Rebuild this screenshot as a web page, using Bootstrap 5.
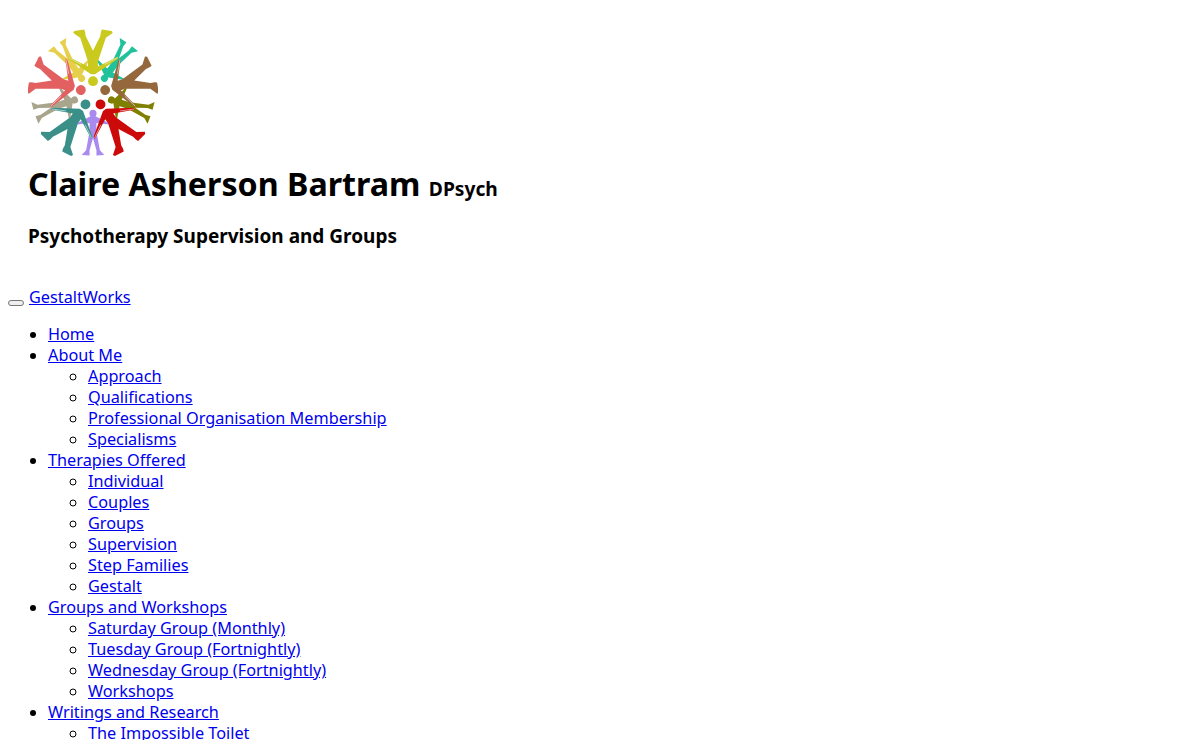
<!DOCTYPE html>
<html lang="en">
  <head>
    <meta charset="UTF-8" />
    <meta name="viewport" content="width=device-width, initial-scale=1.0" />
    <title>Claire Asherson Bartram</title>
    <link href="https://cdn.jsdelivr.net/npm/bootstrap@5.3.0/dist/css/bootstrap.min.css" rel="stylesheet" />
    <style>
      body {
        margin: 8px;
        font-family: "Noto Sans", sans-serif;
        font-size: 16.25px;
        line-height: 21px;
        color: #000;
        background: #fff;
      }
      a { color: #0000ee; }
      .site-head { padding: 20px 0 0 20px; }
      .site-logo { display: block; width: 130px; height: 132px; }
      .site-name { font-size: 32.2px; font-weight: 700; line-height: 45px; margin: 1px 0 0; color: #000; }
      .site-name small { font-size: 19.2px; font-weight: 700; }
      .site-tag { font-size: 19px; font-weight: 700; line-height: 27px; margin: 12px 0 0; }
      .nav-line { margin-top: 37px; height: 21px; }
      .bare-toggle {
        width: 16px;
        height: 6px;
        padding: 0;
        margin-right: 5px;
        background: #efefef;
        border: 1px solid #767676;
        border-radius: 3px;
        vertical-align: -2px;
      }
      .site-menu, .site-menu ul { padding-left: 40px; margin: 0; }
      .site-menu { list-style: disc; margin-top: 16px; }
      .site-menu ul { list-style: circle; }
    </style>
  </head>
  <body>
    <header class="site-head">
      <svg class="site-logo" viewBox="27 26 132 134" role="img" aria-label="Logo">
        <defs>
          <g id="big">
            <circle cx="0" cy="-13" r="5" stroke="none" />
            <path d="M-2 -20 L-25 -35.5 L-25.5 -38 L-5 -28 L-5 -33 L-13 -57 L-20 -62 L-19 -64 L-9 -65.5 L-8 -63 L-7.5 -59 L0 -44 L7.5 -59 L8 -63 L9 -65.5 L19 -64 L20 -62 L13 -57 L5 -33 L5 -28 L25.5 -38 L25 -35.5 L2 -20 Z" stroke="none" />
            <path d="M-25 -37 L-12 -30 M25 -37 L12 -30" stroke="#fff" stroke-width=".5" fill="none" />
          </g>
          <g id="little">
            <circle cx="0" cy="-19.7" r="3.6" stroke="none" />
            <path d="M-1.5 -22 L-16 -29.5 L-16 -31 L-3.5 -29.5 L-3.5 -38 L-7 -57 L-11.5 -62 L-3.5 -62.5 L-3.5 -57 L0 -45 L3.5 -57 L3.5 -62.5 L11.5 -62 L7 -57 L3.5 -38 L3.5 -29.5 L16 -31 L16 -29.5 L1.5 -22 Z" stroke="none" />
          </g>
        </defs>
        <g transform="translate(93 93)">
          <use href="#little" fill="#e6cf4a" transform="rotate(-36)" />
          <use href="#little" fill="#1fc29b" transform="rotate(36)" />
          <use href="#little" fill="#808000" transform="rotate(108)" />
          <use href="#little" fill="#a98bf0" transform="rotate(180)" />
          <use href="#little" fill="#a9a48c" transform="rotate(252)" />
          <use href="#big" fill="#c9c91e" />
          <use href="#big" fill="#94683c" transform="rotate(72)" />
          <use href="#big" fill="#cc0a0a" transform="rotate(144)" />
          <use href="#big" fill="#3a8f88" transform="rotate(216)" />
          <use href="#big" fill="#e26060" transform="rotate(288)" />
        </g>
      </svg>
      <h1 class="site-name">Claire Asherson Bartram <small>DPsych</small></h1>
      <h3 class="site-tag">Psychotherapy Supervision and Groups</h3>
    </header>
    <nav>
      <div class="nav-line">
        <button class="bare-toggle" type="button" aria-label="Toggle menu"></button><a href="#">GestaltWorks</a>
      </div>
      <ul class="site-menu">
        <li><a href="#">Home</a></li>
        <li><a href="#">About Me</a>
          <ul>
            <li><a href="#">Approach</a></li>
            <li><a href="#">Qualifications</a></li>
            <li><a href="#">Professional Organisation Membership</a></li>
            <li><a href="#">Specialisms</a></li>
          </ul>
        </li>
        <li><a href="#">Therapies Offered</a>
          <ul>
            <li><a href="#">Individual</a></li>
            <li><a href="#">Couples</a></li>
            <li><a href="#">Groups</a></li>
            <li><a href="#">Supervision</a></li>
            <li><a href="#">Step Families</a></li>
            <li><a href="#">Gestalt</a></li>
          </ul>
        </li>
        <li><a href="#">Groups and Workshops</a>
          <ul>
            <li><a href="#">Saturday Group (Monthly)</a></li>
            <li><a href="#">Tuesday Group (Fortnightly)</a></li>
            <li><a href="#">Wednesday Group (Fortnightly)</a></li>
            <li><a href="#">Workshops</a></li>
          </ul>
        </li>
        <li><a href="#">Writings and Research</a>
          <ul>
            <li><a href="#">The Impossible Toilet</a></li>
          </ul>
        </li>
      </ul>
    </nav>
    <script src="https://cdn.jsdelivr.net/npm/bootstrap@5.3.0/dist/js/bootstrap.bundle.min.js"></script>
  </body>
</html>
